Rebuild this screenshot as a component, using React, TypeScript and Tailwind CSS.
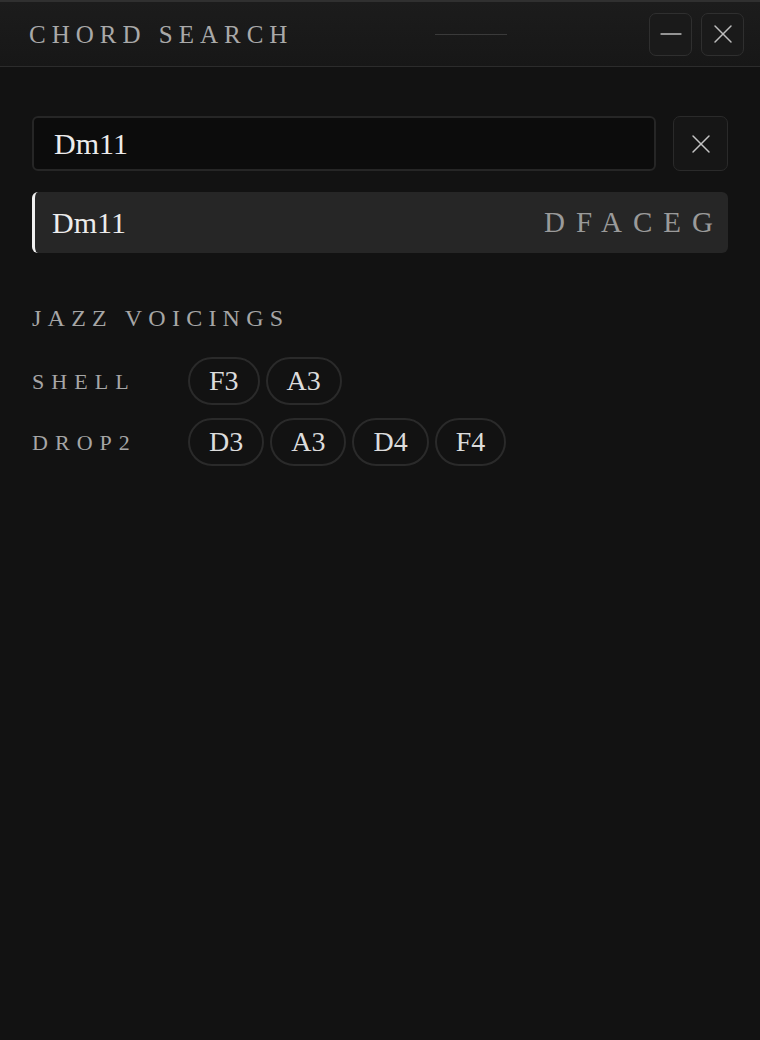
import React, { useState } from 'react';
import { X, Minus } from 'lucide-react';

const serif = { fontFamily: '"Liberation Serif", "DejaVu Serif", serif' };

const voicings = [
  { name: 'SHELL', notes: ['F3', 'A3'] },
  { name: 'DROP2', notes: ['D3', 'A3', 'D4', 'F4'] },
];

const App: React.FC = () => {
  const [query, setQuery] = useState('Dm11');

  return (
    <div className="min-h-screen bg-[#121212] text-[#e8e8e8]" style={serif}>
      {/* Header */}
      <header className="h-[67px] border-t-2 border-b border-t-[#303030] border-b-[#2c2c2c] bg-gradient-to-b from-[#1c1c1c] to-[#171717] flex items-center pl-[29px] pr-[16px]">
        <h1 className="flex-1 text-[25px] tracking-[0.24em] text-[#a9a9a9] leading-none">CHORD SEARCH</h1>
        <div className="w-[72px] h-px bg-[#3a3a3a] mr-[142px]" />
        <div className="flex gap-[9px]">
          <button className="w-[43px] h-[43px] rounded-[7px] border border-[#2f2f2f] bg-[#1a1a1a] flex items-center justify-center text-[#bdbdbd]">
            <Minus className="w-[34px] h-[34px]" strokeWidth={1.1} />
          </button>
          <button className="w-[43px] h-[43px] rounded-[7px] border border-[#2f2f2f] bg-[#1a1a1a] flex items-center justify-center text-[#bdbdbd]">
            <X className="w-[32px] h-[32px]" strokeWidth={1.1} />
          </button>
        </div>
      </header>

      <main className="px-[32px] pt-[49px]">
        {/* Search input */}
        <div className="flex gap-[17px]">
          <input
            value={query}
            onChange={(e) => setQuery(e.target.value)}
            className="flex-1 h-[55px] rounded-[6px] border-2 border-[#262626] bg-[#0c0c0c] pl-[20px] text-[30px] text-[#ececec] outline-none"
            style={serif}
          />
          <button className="w-[55px] h-[55px] rounded-[7px] border border-[#2a2a2a] bg-[#161616] flex items-center justify-center text-[#c4c4c4]">
            <X className="w-[32px] h-[32px]" strokeWidth={1.1} />
          </button>
        </div>

        {/* Result */}
        <div className="mt-[21px] h-[61px] rounded-[6px] border-l-[3px] border-l-[#f0f0f0] bg-[#262626] flex items-center justify-between pl-[17px] pr-[4px]">
          <span className="text-[30px] text-[#ececec]">Dm11</span>
          <span className="text-[29px] tracking-[0.38em] text-[#9a9a9a]">DFACEG</span>
        </div>

        {/* Voicings */}
        <h2 className="mt-[50px] text-[24px] leading-[30px] tracking-[0.26em] text-[#a6a6a6]">JAZZ VOICINGS</h2>
        <div className="mt-[24px] flex flex-col gap-[13px]">
          {voicings.map((v) => (
            <div key={v.name} className="flex items-center">
              <span className="w-[156px] text-[22px] tracking-[0.32em] text-[#a6a6a6]">{v.name}</span>
              <div className="flex gap-[6px]">
                {v.notes.map((n, i) => (
                  <span
                    key={i}
                    className="h-[48px] rounded-full border-2 border-[#2a2a2a] px-[19px] flex items-center text-[28px] text-[#dcdcdc]"
                  >
                    {n}
                  </span>
                ))}
              </div>
            </div>
          ))}
        </div>
      </main>
    </div>
  );
};

export default App;
